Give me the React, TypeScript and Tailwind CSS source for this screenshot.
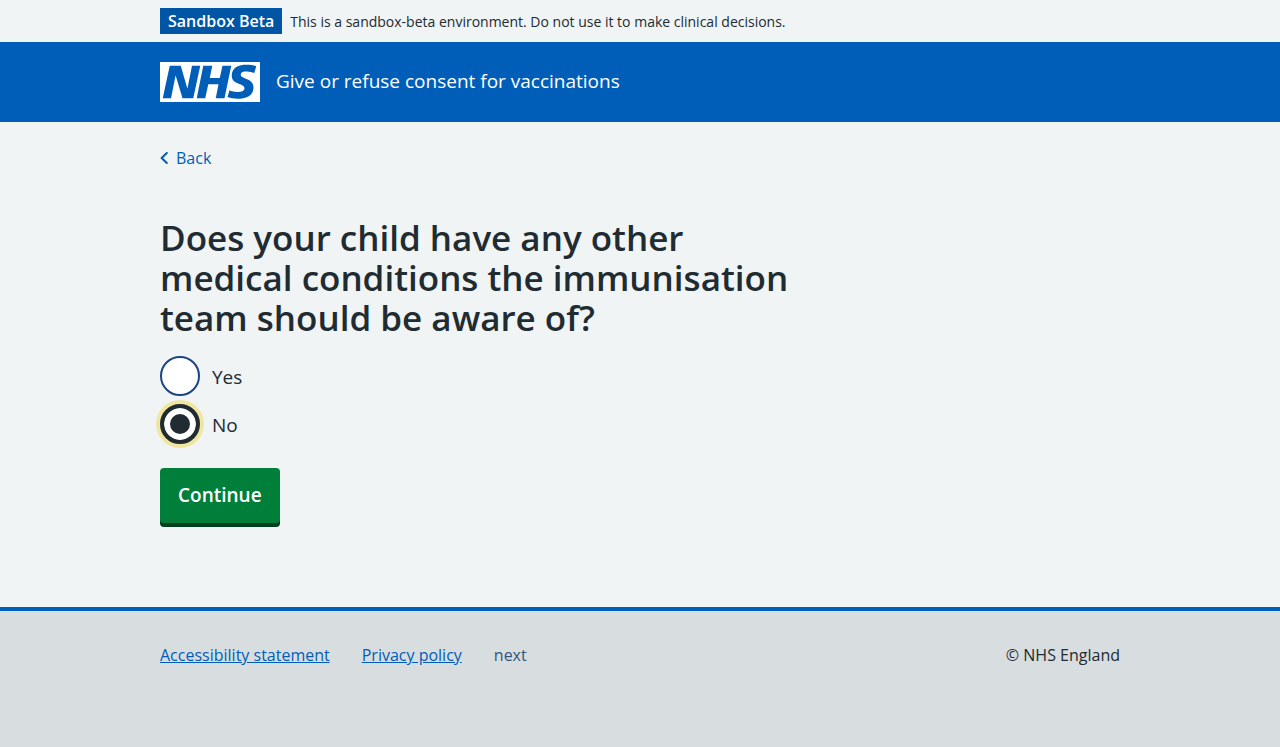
import { useState } from "react";

const OPTIONS = ["Yes", "No"];

function NhsLogo() {
  return (
    <svg viewBox="0 0 200 80" className="h-10 w-[100px] shrink-0" role="img" aria-label="NHS">
      <path
        fill="#fff"
        d="M200 0v80H0V0h200Zm-27.5 5.5c-14.5 0-29 5-29 22 0 10.2 7.7 13.5 14.7 16.3l.7.3c5.4 2 10.1 3.9 10.1 8.4 0 6.5-8.5 7.5-14 7.5s-12.5-1.5-16-3.5L135 70c5.5 2 13.5 3.5 20 3.5 15.5 0 32-4.5 32-22.5 0-19.5-25.5-16.5-25.5-25.5 0-5.5 5.5-6.5 12.5-6.5a35 35 0 0 1 14.5 3l4-13.5c-4.5-2-12-3-20-3Zm-131 2h-22l-14 65H22l9-45h.5l13.5 45h21.5l14-65H64l-9 45h-.5l-13-45Zm63 0h-18l-13 65h17l6-28H117l-5.5 28H129l13.5-65H125L119.5 32h-20l5-24.5Z"
      />
    </svg>
  );
}

export default function App() {
  const [answer, setAnswer] = useState("No");

  return (
    <div className="min-h-screen bg-[#d8dde0] font-['Open_Sans',sans-serif] text-base text-[#212b32]">
      <div className="bg-[#f0f4f5] px-8 py-2">
        <div className="mx-auto flex max-w-[960px] items-center gap-2">
          <strong className="bg-[#0055a5] px-2 text-base leading-[26px] font-semibold whitespace-nowrap text-white">
            Sandbox Beta
          </strong>
          <span className="pt-0.5 text-sm">
            This is a sandbox-beta environment. Do not use it to make clinical decisions.
          </span>
        </div>
      </div>

      <header className="bg-[#005eb8] px-8 py-5">
        <div className="mx-auto flex max-w-[960px] items-center gap-4">
          <NhsLogo />
          <span className="pb-0.5 text-[19px] leading-7 text-white">Give or refuse consent for vaccinations</span>
        </div>
      </header>

      <div className="bg-[#f0f4f5] px-8 pt-6 pb-20">
        <div className="mx-auto max-w-[960px]">
          <a href="#back" className="inline-flex items-center gap-2 leading-6 text-[#005eb8]">
            <svg viewBox="0 0 8 12" className="h-3 w-2" fill="none" aria-hidden="true">
              <path d="M6.8 1 1.6 6l5.2 5" stroke="currentColor" strokeWidth="2" strokeLinecap="round" strokeLinejoin="round" />
            </svg>
            Back
          </a>

          <main className="max-w-[640px] pt-12">
            <form onSubmit={(event) => event.preventDefault()}>
              <fieldset>
                <legend className="pb-[18px] text-[35px] leading-10 font-semibold">
                  Does your child have any other medical conditions the immunisation team should be aware of?
                </legend>
                <div className="flex flex-col gap-2">
                  {OPTIONS.map((option) => (
                    <div key={option} className="flex items-center gap-3">
                      <input
                        type="radio"
                        id={option}
                        name="conditions"
                        value={option}
                        checked={answer === option}
                        onChange={() => setAnswer(option)}
                        className="size-10 appearance-none rounded-full border-2 border-[#1d4482] bg-white outline-none checked:border-4 checked:border-[#212b32] checked:bg-[#212b32] checked:inset-ring-[6px] checked:inset-ring-white checked:ring-4 checked:ring-[#f0e6a0]"
                      />
                      <label htmlFor={option} className="pt-0.5 text-[19px] leading-7">
                        {option}
                      </label>
                    </div>
                  ))}
                </div>
              </fieldset>
              <button
                type="submit"
                className="mt-6 mb-1 rounded-sm bg-[#007f3b] px-[18px] pt-[13px] pb-[14px] text-[19px] leading-7 font-semibold text-white shadow-[0_4px_0_#00401e]"
              >
                Continue
              </button>
            </form>
          </main>
        </div>
      </div>

      <footer className="border-t-4 border-[#005eb8] px-8 py-8">
        <div className="mx-auto flex max-w-[960px] items-center justify-between leading-6">
          <nav className="flex gap-8">
            <a href="#accessibility" className="text-[#005eb8] underline">Accessibility statement</a>
            <a href="#privacy" className="text-[#005eb8] underline">Privacy policy</a>
            <span className="text-[#33557a]">next</span>
          </nav>
          <p>© NHS England</p>
        </div>
      </footer>
    </div>
  );
}
